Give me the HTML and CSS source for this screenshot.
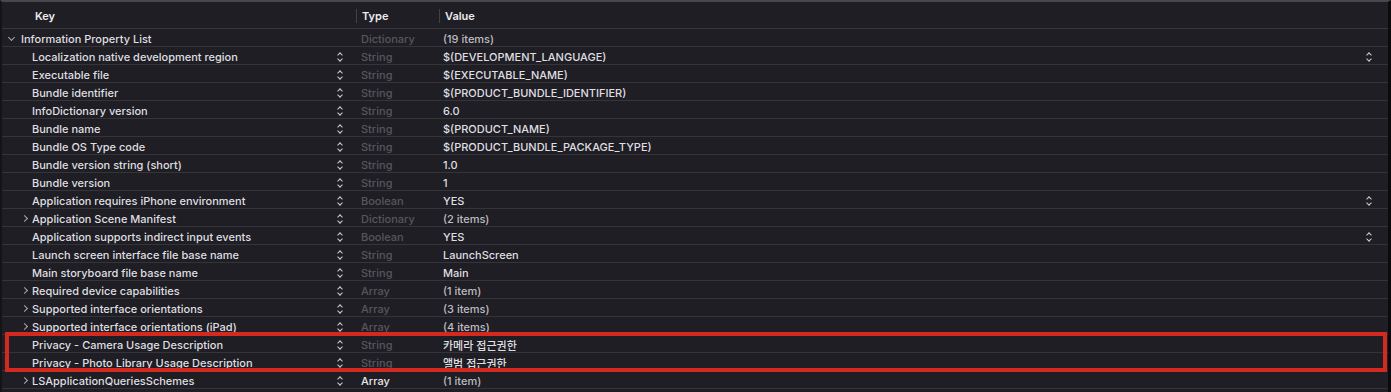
FILE: index.html
```html
<!DOCTYPE html>
<html>

<head>
  <title>Info.plist</title>
  <link rel="stylesheet" href="styles.css">
</head>

<body>
  <div class="plist">
    <div class="plist-head">
      <div class="head-cell head-key">Key</div>
      <div class="head-cell head-type">Type</div>
      <div class="head-cell head-value">Value</div>
    </div>

    <div class="plist-row">
      <div class="cell-key root"><span class="disclosure open"></span>Information Property List</div>
      <div class="cell-type">Dictionary</div>
      <div class="cell-value dim">(19 items)</div>
    </div>
    <div class="plist-row">
      <div class="cell-key"><span class="disclosure"></span><span class="key-name">Localization native development region</span><span class="stepper"></span></div>
      <div class="cell-type">String</div>
      <div class="cell-value"><span class="value-text">$(DEVELOPMENT_LANGUAGE)</span><span class="stepper"></span></div>
    </div>
    <div class="plist-row">
      <div class="cell-key"><span class="disclosure"></span><span class="key-name">Executable file</span><span class="stepper"></span></div>
      <div class="cell-type">String</div>
      <div class="cell-value">$(EXECUTABLE_NAME)</div>
    </div>
    <div class="plist-row">
      <div class="cell-key"><span class="disclosure"></span><span class="key-name">Bundle identifier</span><span class="stepper"></span></div>
      <div class="cell-type">String</div>
      <div class="cell-value">$(PRODUCT_BUNDLE_IDENTIFIER)</div>
    </div>
    <div class="plist-row">
      <div class="cell-key"><span class="disclosure"></span><span class="key-name">InfoDictionary version</span><span class="stepper"></span></div>
      <div class="cell-type">String</div>
      <div class="cell-value">6.0</div>
    </div>
    <div class="plist-row">
      <div class="cell-key"><span class="disclosure"></span><span class="key-name">Bundle name</span><span class="stepper"></span></div>
      <div class="cell-type">String</div>
      <div class="cell-value">$(PRODUCT_NAME)</div>
    </div>
    <div class="plist-row">
      <div class="cell-key"><span class="disclosure"></span><span class="key-name">Bundle OS Type code</span><span class="stepper"></span></div>
      <div class="cell-type">String</div>
      <div class="cell-value">$(PRODUCT_BUNDLE_PACKAGE_TYPE)</div>
    </div>
    <div class="plist-row">
      <div class="cell-key"><span class="disclosure"></span><span class="key-name">Bundle version string (short)</span><span class="stepper"></span></div>
      <div class="cell-type">String</div>
      <div class="cell-value">1.0</div>
    </div>
    <div class="plist-row">
      <div class="cell-key"><span class="disclosure"></span><span class="key-name">Bundle version</span><span class="stepper"></span></div>
      <div class="cell-type">String</div>
      <div class="cell-value">1</div>
    </div>
    <div class="plist-row">
      <div class="cell-key"><span class="disclosure"></span><span class="key-name">Application requires iPhone environment</span><span class="stepper"></span></div>
      <div class="cell-type">Boolean</div>
      <div class="cell-value"><span class="value-text">YES</span><span class="stepper"></span></div>
    </div>
    <div class="plist-row">
      <div class="cell-key"><span class="disclosure closed"></span><span class="key-name">Application Scene Manifest</span><span class="stepper"></span></div>
      <div class="cell-type">Dictionary</div>
      <div class="cell-value dim">(2 items)</div>
    </div>
    <div class="plist-row">
      <div class="cell-key"><span class="disclosure"></span><span class="key-name">Application supports indirect input events</span><span class="stepper"></span></div>
      <div class="cell-type">Boolean</div>
      <div class="cell-value"><span class="value-text">YES</span><span class="stepper"></span></div>
    </div>
    <div class="plist-row">
      <div class="cell-key"><span class="disclosure"></span><span class="key-name">Launch screen interface file base name</span><span class="stepper"></span></div>
      <div class="cell-type">String</div>
      <div class="cell-value">LaunchScreen</div>
    </div>
    <div class="plist-row">
      <div class="cell-key"><span class="disclosure"></span><span class="key-name">Main storyboard file base name</span><span class="stepper"></span></div>
      <div class="cell-type">String</div>
      <div class="cell-value">Main</div>
    </div>
    <div class="plist-row">
      <div class="cell-key"><span class="disclosure closed"></span><span class="key-name">Required device capabilities</span><span class="stepper"></span></div>
      <div class="cell-type">Array</div>
      <div class="cell-value dim">(1 item)</div>
    </div>
    <div class="plist-row">
      <div class="cell-key"><span class="disclosure closed"></span><span class="key-name">Supported interface orientations</span><span class="stepper"></span></div>
      <div class="cell-type">Array</div>
      <div class="cell-value dim">(3 items)</div>
    </div>
    <div class="plist-row">
      <div class="cell-key"><span class="disclosure closed"></span><span class="key-name">Supported interface orientations (iPad)</span><span class="stepper"></span></div>
      <div class="cell-type">Array</div>
      <div class="cell-value dim">(4 items)</div>
    </div>

    <div class="highlight-group">
      <div class="plist-row">
        <div class="cell-key"><span class="disclosure"></span><span class="key-name">Privacy - Camera Usage Description</span><span class="stepper"></span></div>
        <div class="cell-type">String</div>
        <div class="cell-value">카메라 접근권한</div>
      </div>
      <div class="plist-row">
        <div class="cell-key"><span class="disclosure"></span><span class="key-name">Privacy - Photo Library Usage Description</span><span class="stepper"></span></div>
        <div class="cell-type">String</div>
        <div class="cell-value">앨범 접근권한</div>
      </div>
      <div class="highlight-box"></div>
    </div>

    <div class="plist-row">
      <div class="cell-key"><span class="disclosure closed"></span><span class="key-name">LSApplicationQueriesSchemes</span><span class="stepper"></span></div>
      <div class="cell-type strong">Array</div>
      <div class="cell-value dim">(1 item)</div>
    </div>
  </div>
</body>

</html>
```

FILE: styles.css
```css
html, body {
    margin: 0;
    padding: 0;
    background-color: #1f1e24;
}
body {
    font-family: Inter, "Noto Sans CJK KR", sans-serif;
    font-size: 11px;
    font-weight: 500;
    color: #dfdfe1;
    height: 392px;
    overflow: hidden;
}
.plist {
    border-top: 2px solid #48474c;
    border-left: 2px solid #141317;
    border-right: 3px solid #0b0b0d;
    height: 390px;
}
.plist-head {
    display: grid;
    grid-template-columns: 354px 83px 1fr;
    box-sizing: border-box;
    height: 27px;
    padding-top: 2px;
    border-bottom: 1px solid #38373c;
    font-weight: 600;
    color: #ececee;
}
.head-cell {
    display: flex;
    align-items: center;
}
.head-key {
    padding-left: 33px;
}
.head-type, .head-value {
    padding-left: 5px;
    border-left: 1px solid #424146;
    margin: 5px 0;
}
.plist-row {
    display: grid;
    grid-template-columns: 354px 83px 1fr;
    box-sizing: border-box;
    height: 18px;
    padding-top: 2px;
    border-bottom: 1px solid #353439;
    align-items: center;
}
.cell-key {
    display: flex;
    align-items: center;
    height: 100%;
    padding-left: 20px;
    padding-right: 12px;
}
.cell-key.root {
    padding-left: 5px;
}
.key-name {
    flex: 1;
    white-space: nowrap;
}
.disclosure {
    width: 10px;
    height: 10px;
    flex: none;
    position: relative;
}
.cell-key.root .disclosure {
    margin-right: 4px;
}
.disclosure.open::before,
.disclosure.closed::before {
    content: "";
    position: absolute;
    width: 4px;
    height: 4px;
    border-right: 1.2px solid #a9a8ad;
    border-bottom: 1.2px solid #a9a8ad;
}
.disclosure.open::before {
    left: 2px;
    top: 1px;
    transform: rotate(45deg);
}
.disclosure.closed::before {
    left: 0;
    top: 2px;
    transform: rotate(-45deg);
}
.stepper {
    width: 7px;
    height: 11px;
    flex: none;
    position: relative;
    margin-top: 1px;
}
.stepper::before,
.stepper::after {
    content: "";
    position: absolute;
    left: 1px;
    width: 3px;
    height: 3px;
    border-color: #cfcfd2;
    border-style: solid;
    border-width: 0;
}
.stepper::before {
    top: 1px;
    border-top-width: 1.4px;
    border-left-width: 1.4px;
    transform: rotate(45deg);
}
.stepper::after {
    top: 5px;
    border-bottom-width: 1.4px;
    border-right-width: 1.4px;
    transform: rotate(45deg);
}
.cell-type {
    padding-left: 5px;
    color: #57565c;
}
.cell-type.strong {
    color: #e6e6e8;
}
.cell-value {
    display: flex;
    align-items: center;
    height: 100%;
    padding-left: 4px;
    padding-right: 15px;
    white-space: nowrap;
}
.cell-value.dim {
    color: #bdbcc1;
}
.value-text {
    flex: 1;
}
.highlight-group {
    position: relative;
}
.highlight-box {
    position: absolute;
    left: 3px;
    right: 1px;
    top: -3px;
    bottom: -1px;
    border: 4px solid #d4291f;
    pointer-events: none;
}
```
